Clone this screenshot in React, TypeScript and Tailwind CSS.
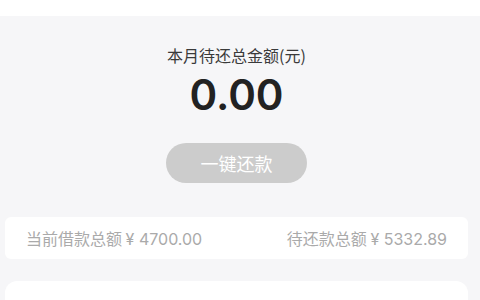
export default function App() {
  const font = { fontFamily: '"Noto Sans CJK SC", "Noto Sans", sans-serif' };
  const num = { fontFamily: 'Inter, "Liberation Sans", sans-serif' };
  return (
    <div className="h-[300px] w-[480px] overflow-hidden bg-[#f6f6f8]" style={font}>
      <div className="h-[16px] bg-white" />
      <div className="pl-[5px] pr-[12px]">
        <div className="flex flex-col items-center">
          <div className="mt-[29px] text-[16px] leading-[20px] text-[#3a3a3a]">本月待还总金额(元)</div>
          <div className="mt-[4px] text-[42px] font-semibold leading-[52px] text-[#222]" style={num}>
            0.00
          </div>
          <button className="mt-[22px] flex h-[40px] w-[141px] items-center justify-center rounded-full bg-[#cccccc] text-[18px] text-white">
            一键还款
          </button>
        </div>
        <div className="mt-[34px] flex h-[42px] items-center justify-between rounded-[6px] bg-white px-[21px] text-[16px] text-[#aaaaaa]">
          <span>
            当前借款总额 <span style={num}>¥ 4700.00</span>
          </span>
          <span>
            待还款总额 <span style={num}>¥ 5332.89</span>
          </span>
        </div>
        <div className="mt-[22px] h-[60px] rounded-[12px] bg-white" />
      </div>
    </div>
  );
}
